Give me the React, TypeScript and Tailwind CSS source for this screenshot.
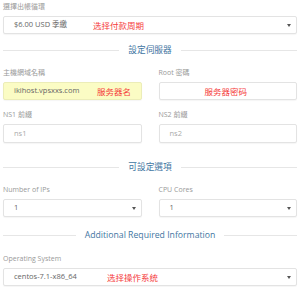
import { ReactNode } from "react";

const font = { fontFamily: '"Open Sans", "Noto Sans CJK TC", sans-serif' };

function Label({ children }: { children: ReactNode }) {
  return <div className="h-[10px] text-[7px] leading-[10px] text-[#999]">{children}</div>;
}

function Note({ children, className }: { children: ReactNode; className: string }) {
  return (
    <span
      className={`absolute top-1/2 -translate-y-1/2 text-[8.5px] leading-none text-[#f53b3b] ${className}`}
      style={{ fontFamily: '"Noto Sans CJK SC", sans-serif' }}
    >
      {children}
    </span>
  );
}

function Field({
  value,
  select,
  muted,
  yellow,
  note,
  h = "h-[18px]",
}: {
  value: string;
  select?: boolean;
  muted?: boolean;
  yellow?: boolean;
  note?: ReactNode;
  h?: string;
}) {
  return (
    <div
      className={`relative mt-[4px] flex ${h} items-center justify-between rounded-[2px] border pl-[10px] pr-[5px] shadow-[0_1px_1px_rgba(0,0,0,0.04)] ${
        yellow ? "border-[#ecedb8] bg-[#fbfcc4]" : "border-[#e3e3e3] bg-white"
      }`}
    >
      <span className={`text-[7.5px] leading-none ${muted ? "text-[#aaa]" : "text-[#666]"}`}>{value}</span>
      {select && (
        <span className="h-0 w-0 border-x-[2px] border-t-[3px] border-x-transparent border-t-[#555]" />
      )}
      {note}
    </div>
  );
}

function Divider({ title, className }: { title: string; className: string }) {
  return (
    <div className={`flex h-[12px] items-center gap-[9px] ${className}`}>
      <div className="h-px flex-1 bg-[#e6e6e6]" />
      <span className="text-[8.7px] leading-none text-[#3f76a2]">{title}</span>
      <div className="h-px flex-1 bg-[#e6e6e6]" />
    </div>
  );
}

export default function App() {
  return (
    <div className="h-[287px] w-[300px] overflow-hidden bg-white px-[3px] pt-[2px]" style={font}>
      <Label>選擇出帳循環</Label>
      <Field value="$6.00 USD 季繳" select note={<Note className="left-[89px]">选择付款周期</Note>} />

      <Divider title="設定伺服器" className="mt-[10px]" />

      <div className="mt-[12px] grid grid-cols-2 gap-x-[17px]">
        <div>
          <Label>主機網域名稱</Label>
          <Field value="ikihost.vpsxxs.com" yellow note={<Note className="left-[93px]">服务器名</Note>} />
        </div>
        <div>
          <Label>Root 密碼</Label>
          <Field value="" note={<Note className="left-[45px]">服务器密码</Note>} />
        </div>
      </div>

      <div className="mt-[10px] grid grid-cols-2 gap-x-[17px]">
        <div>
          <Label>NS1 前綴</Label>
          <Field value="ns1" muted h="h-[19px]" />
        </div>
        <div>
          <Label>NS2 前綴</Label>
          <Field value="ns2" muted h="h-[19px]" />
        </div>
      </div>

      <Divider title="可設定選項" className="mt-[18px]" />

      <div className="mt-[12px] grid grid-cols-2 gap-x-[17px]">
        <div>
          <Label>Number of IPs</Label>
          <Field value="1" select />
        </div>
        <div>
          <Label>CPU Cores</Label>
          <Field value="1" select />
        </div>
      </div>

      <Divider title="Additional Required Information" className="mt-[12px]" />

      <div className="mt-[13px]">
        <Label>Operating System</Label>
        <Field value="centos-7.1-x86_64" select note={<Note className="left-[103px]">选择操作系统</Note>} />
      </div>
    </div>
  );
}
